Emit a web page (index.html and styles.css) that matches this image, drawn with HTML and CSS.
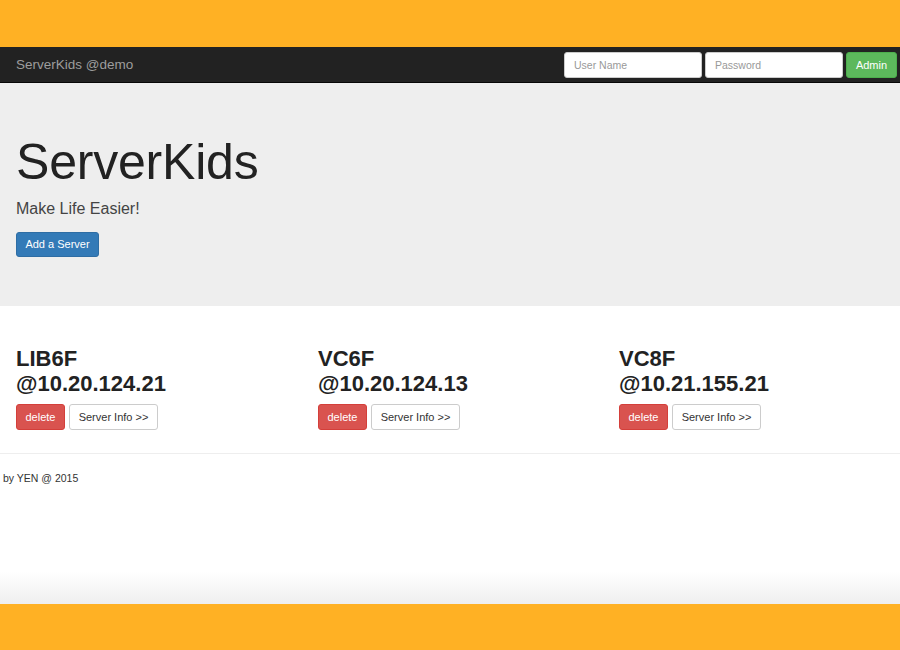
FILE: index.html
```html
<!DOCTYPE html>
<html>
<head>
<meta charset="utf-8">
<link rel="stylesheet" href="styles.css">
</head>
<body>
<div class="frame">
  <div class="band-top"></div>
  <nav class="navbar">
    <span class="brand">ServerKids @demo</span>
    <form class="login">
      <input class="field" type="text" placeholder="User Name">
      <input class="field" type="password" placeholder="Password">
      <button type="button" class="btn btn-success">Admin</button>
    </form>
  </nav>
  <header class="jumbotron">
    <h1 class="title">ServerKids</h1>
    <p class="lead">Make Life Easier!</p>
    <button type="button" class="btn btn-primary">Add a Server</button>
  </header>
  <main class="servers">
    <div class="server">
      <h2 class="server-name">LIB6F<br>@10.20.124.21</h2>
      <div class="actions">
        <button type="button" class="btn btn-danger">delete</button>
        <button type="button" class="btn btn-default">Server Info &gt;&gt;</button>
      </div>
    </div>
    <div class="server">
      <h2 class="server-name">VC6F<br>@10.20.124.13</h2>
      <div class="actions">
        <button type="button" class="btn btn-danger">delete</button>
        <button type="button" class="btn btn-default">Server Info &gt;&gt;</button>
      </div>
    </div>
    <div class="server">
      <h2 class="server-name">VC8F<br>@10.21.155.21</h2>
      <div class="actions">
        <button type="button" class="btn btn-danger">delete</button>
        <button type="button" class="btn btn-default">Server Info &gt;&gt;</button>
      </div>
    </div>
  </main>
  <footer class="footer">
    <p>by YEN @ 2015</p>
  </footer>
  <div class="spacer"></div>
  <div class="band-bottom"></div>
</div>
</body>
</html>
```

FILE: styles.css
```css
* { box-sizing: border-box; }
html, body { margin: 0; padding: 0; }
body {
  font-family: "Liberation Sans", Arial, sans-serif;
  color: #333;
  background: #fff;
}
.frame {
  width: 900px;
  height: 650px;
  display: flex;
  flex-direction: column;
  overflow: hidden;
}
.band-top {
  height: 47px;
  background: #ffb124;
  flex: none;
}
.band-bottom {
  height: 46px;
  background: #ffb124;
  flex: none;
}
.spacer {
  flex: 1;
  background: linear-gradient(to bottom, #fff 0, #fff calc(100% - 32px), #efefef 100%);
}
.navbar {
  height: 36px;
  flex: none;
  background: #222;
  border-bottom: 1px solid #080808;
  display: flex;
  align-items: center;
  justify-content: space-between;
  padding: 0 3px 0 16px;
}
.brand {
  color: #9d9d9d;
  font-size: 13.5px;
  margin-top: -1px;
}
.login {
  display: flex;
  gap: 3px;
  margin: 0;
  align-items: center;
}
.field {
  width: 138px;
  height: 26px;
  border: 1px solid #ccc;
  border-radius: 3px;
  padding: 0 9px;
  font-family: inherit;
  font-size: 10.5px;
  color: #555;
  background: #fff;
}
.field::placeholder { color: #999; }
.btn {
  font-family: inherit;
  font-size: 11px;
  border: 1px solid transparent;
  border-radius: 3px;
  padding: 0;
  height: 26px;
  line-height: 24px;
  cursor: pointer;
}
.btn-success {
  background: #5cb85c;
  border-color: #4cae4c;
  color: #fff;
  width: 51px;
}
.btn-primary {
  background: #337ab7;
  border-color: #2e6da4;
  color: #fff;
  height: 25px;
  line-height: 23px;
  width: 83px;
}
.btn-danger {
  background: #d9534f;
  border-color: #d43f3a;
  color: #fff;
  width: 49px;
}
.btn-default {
  background: #fff;
  border-color: #ccc;
  color: #333;
  width: 89px;
}
.jumbotron {
  background: #eee;
  height: 223px;
  flex: none;
  padding: 0 16px;
  display: flex;
  flex-direction: column;
  align-items: flex-start;
  padding-top: 51px;
}
.title {
  margin: 0;
  font-size: 50px;
  font-weight: normal;
  line-height: 56px;
  color: #222;
  letter-spacing: -0.2px;
}
.lead {
  margin: 8px 0 0 0;
  font-size: 16px;
  line-height: 22px;
  color: #444;
  font-weight: 300;
}
.jumbotron .btn { margin-top: 12px; }
.servers {
  display: grid;
  grid-template-columns: 302px 301px 297px;
  padding: 0 0 0 16px;
  margin-top: 40px;
  flex: none;
}
.server-name {
  margin: 0;
  font-size: 22px;
  line-height: 25px;
  font-weight: bold;
  color: #222;
}
.actions {
  display: flex;
  gap: 4px;
  margin-top: 8px;
}
.footer {
  margin-top: 23px;
  border-top: 1px solid #eee;
  padding: 0 3px;
  flex: none;
}
.footer p {
  margin: 17px 0 0 0;
  font-size: 10.5px;
  line-height: 14px;
  color: #333;
}
```
